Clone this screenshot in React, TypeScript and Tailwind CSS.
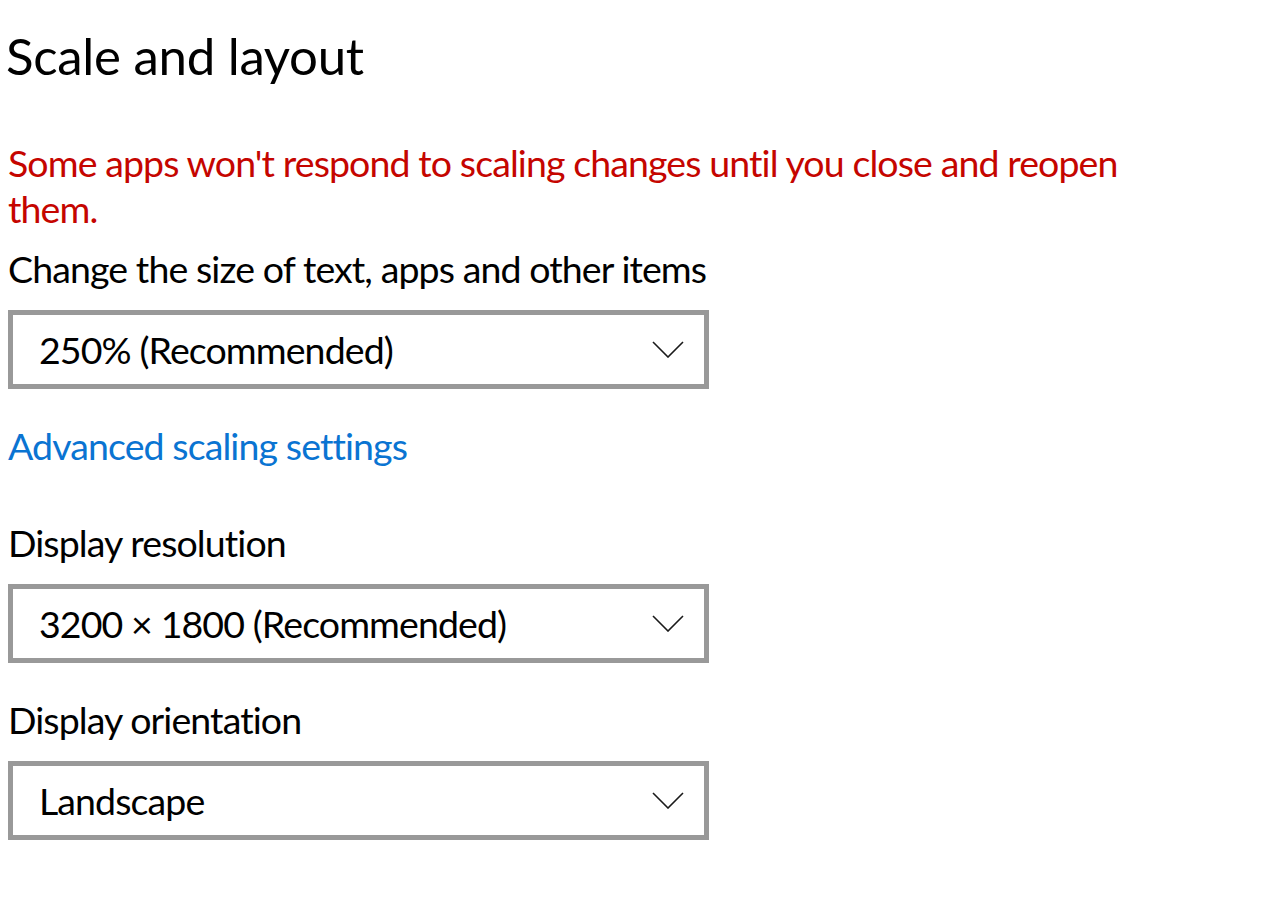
import React from "react";

const font = { fontFamily: 'Lato, "Noto Sans", sans-serif' };

function Chevron() {
  return (
    <svg width="32" height="17" viewBox="0 0 32 17" fill="none" className="shrink-0">
      <path d="M1 1 L16 16 L31 1" stroke="#1a1a1a" strokeWidth="1.6" />
    </svg>
  );
}

function Dropdown({ value }: { value: string }) {
  return (
    <div className="mt-[18px] flex h-[79px] w-[701px] items-center justify-between border-[5px] border-[#999999] bg-white pl-[26px] pr-[20px]">
      <span className="text-[37.5px] leading-none tracking-[-0.9px] text-black">{value}</span>
      <Chevron />
    </div>
  );
}

export default function App() {
  return (
    <div
      className="h-[920px] w-[1275px] overflow-hidden bg-white pl-[8px] pt-[26px] text-black"
      style={font}
    >
      <h1 className="-ml-[2px] text-[51px] leading-[60px] font-normal tracking-[-0.3px]">Scale and layout</h1>
      <p className="mt-[54px] w-[1160px] text-[37.5px] leading-[46px] tracking-[-0.9px] text-[#c50500]">
        Some apps won't respond to scaling changes until you close and reopen them.
      </p>
      <div className="mt-[14px] text-[37.5px] leading-[46px] tracking-[-0.9px]">
        Change the size of text, apps and other items
      </div>
      <Dropdown value="250% (Recommended)" />
      <div className="mt-[34px] text-[37.5px] leading-[46px] tracking-[-0.9px] text-[#0a74d2]">
        Advanced scaling settings
      </div>
      <div className="mt-[51px] text-[37.5px] leading-[46px] tracking-[-0.9px]">Display resolution</div>
      <Dropdown value="3200 × 1800 (Recommended)" />
      <div className="mt-[34px] text-[37.5px] leading-[46px] tracking-[-0.9px]">Display orientation</div>
      <Dropdown value="Landscape" />
    </div>
  );
}
